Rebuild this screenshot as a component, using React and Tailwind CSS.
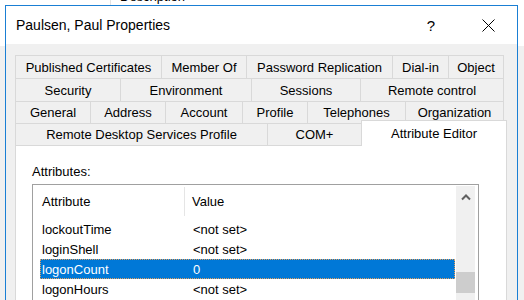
import React from 'react';

const tabRows = [
  [['Published Certificates', 146], ['Member Of', 85], ['Password Replication', 146], ['Dial-in', 56], ['Object', 56]],
  [['Security', 105], ['Environment', 131], ['Sessions', 109], ['Remote control', 144]],
  [['General', 75], ['Address', 75], ['Account', 77], ['Profile', 65], ['Telephones', 98], ['Organization', 99]],
];

const attributes = [
  { name: 'lockoutTime', value: '<not set>' },
  { name: 'loginShell', value: '<not set>' },
  { name: 'logonCount', value: '0', selected: true },
  { name: 'logonHours', value: '<not set>' },
];

const Tab = ({ label, width, last }) => (
  <div
    className={`flex items-center justify-center shrink-0 h-full border-l border-t border-[#d9d9d9] ${last ? 'border-r' : ''}`}
    style={{ width }}
  >
    {label}
  </div>
);

const AttributeRow = ({ attr }) => (
  <div
    className={`ml-[7px] w-[415px] h-[20px] flex items-center ${
      attr.selected
        ? 'bg-[#0078d7] text-white outline-1 outline-dotted outline-[#e0a060] -outline-offset-1'
        : ''
    }`}
  >
    <div className="w-[153px] pl-[2px]">{attr.name}</div>
    <div>{attr.value}</div>
  </div>
);

export default function App() {
  return (
    <div className="relative w-[524px] h-[300px] overflow-hidden bg-[#f0f0f0] font-['Liberation_Sans',Arial,sans-serif] text-[13px] leading-none text-black">
      {/* window behind the dialog */}
      <div className="h-[46px] bg-white flex">
        <div className="w-[110px]" />
        <div className="w-px h-[6px] bg-[#e3e3e3]" />
        <div className="ml-[9px] -mt-[10px] text-[13px]">Description</div>
      </div>

      {/* dialog */}
      <div className="absolute left-[5px] top-[5px] w-[513px] h-[310px] border border-[#1a7fd4] bg-[#f0f0f0] flex flex-col">
        <div className="h-[38px] bg-white flex items-center shrink-0">
          <div className="pl-[10px] flex-1 text-[14px]">Paulsen, Paul Properties</div>
          <div className="w-[56px] flex justify-center text-[15px]">?</div>
          <div className="w-[58px] flex justify-center">
            <svg width="13" height="13" viewBox="0 0 13 13">
              <path d="M0.5 0.5 L12.5 12.5 M12.5 0.5 L0.5 12.5" stroke="#000" strokeWidth="1" fill="none" />
            </svg>
          </div>
        </div>

        <div className="pt-[11px] pl-[9px] flex flex-col">
          {tabRows.map((row, i) => (
            <div key={i} className={`flex w-[489px] ${i === 2 ? 'h-[22px]' : 'h-[23px]'}`}>
              {row.map(([label, w], j) => (
                <Tab key={label} label={label} width={w} last={j === row.length - 1} />
              ))}
            </div>
          ))}
          <div className="flex h-[22px] items-end">
            <Tab label="Remote Desktop Services Profile" width={252} />
            <Tab label="COM+" width={94} />
            <div className="relative z-10 shrink-0 w-[146px] h-[26px] -mb-px flex items-center justify-center bg-white border-l border-t border-r border-[#d9d9d9]">
              Attribute Editor
            </div>
          </div>

          <div className="w-[492px] h-[200px] bg-white border border-[#d9d9d9] pl-[16px] pt-[17px]">
            <div className="h-[16px] flex items-center">Attributes:</div>
            <div className="mt-[5px] w-[447px] h-[160px] border border-[#a0a0a0] flex">
              <div className="w-[423px]">
                <div className="h-[31px] flex items-center">
                  <div className="w-[151px] pl-[9px] pt-[2px]">Attribute</div>
                  <div className="w-px h-[29px] self-end bg-[#e5e5e5]" />
                  <div className="pl-[7px] pt-[2px]">Value</div>
                </div>
                <div className="mt-[3px]">
                  {attributes.map((a) => (
                    <AttributeRow key={a.name} attr={a} />
                  ))}
                </div>
              </div>
              <div className="mt-px w-[19px] bg-[#f0f0f0] flex flex-col items-center">
                <svg className="mt-[8px]" width="10" height="7" viewBox="0 0 10 7">
                  <path d="M1 5.5 L5 1.5 L9 5.5" stroke="#606060" strokeWidth="2" fill="none" />
                </svg>
                <div className="mt-[71px] w-[19px] h-[21px] bg-[#cdcdcd]" />
              </div>
            </div>
          </div>
        </div>
      </div>
    </div>
  );
}
